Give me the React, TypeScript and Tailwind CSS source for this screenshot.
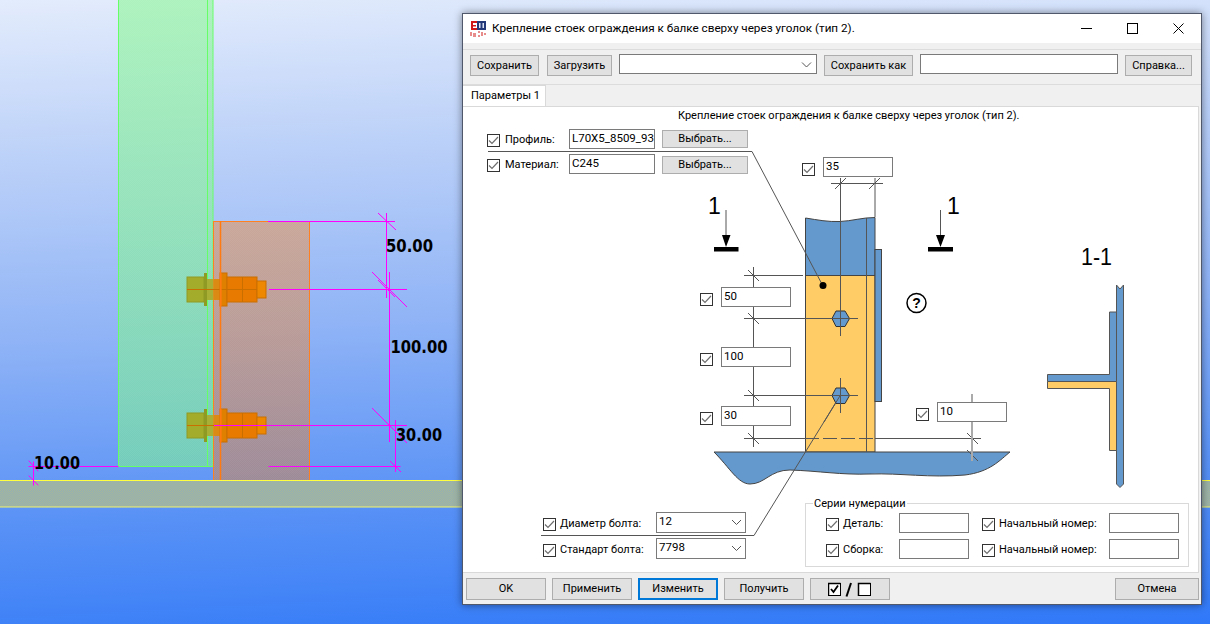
function Check() {
  return (
    <span className="flex h-[13px] w-[13px] shrink-0 items-center justify-center border border-[#333] bg-white">
      <svg width="11" height="11" viewBox="0 0 11 11" fill="none">
        <path d="M1 5.5L4 8.5L10 2" stroke="#6e6e6e" strokeWidth="1.2" />
      </svg>
    </span>
  );
}

function Field({ className = "w-[70px]", value }: { className?: string; value?: string }) {
  return (
    <div className={`h-5 shrink-0 border border-[#7a7a7a] bg-white pl-[2px] text-[11.5px] leading-[16px] text-black ${className}`}>
      {value}
    </div>
  );
}

function Combo({ value }: { value: string }) {
  return (
    <div className="flex h-[21px] w-[90px] shrink-0 items-start justify-between border border-[#7a7a7a] bg-white pl-[2px] pr-[3px] text-[11.5px] leading-[16px] text-black">
      <span>{value}</span>
      <svg width="11" height="19" viewBox="0 0 11 19" fill="none">
        <path d="M1 7L5.5 11.5L10 7" stroke="#555" strokeWidth="1" />
      </svg>
    </div>
  );
}

function Button({ className, label }: { className: string; label: string }) {
  return (
    <div className={`flex h-[21px] shrink-0 items-center justify-center border border-[#adadad] bg-[#e1e1e1] pt-px text-[11px] text-black ${className}`}>
      {label}
    </div>
  );
}

function CheckLabel({ text, className }: { text: string; className: string }) {
  return (
    <div className={`flex shrink-0 items-center ${className}`}>
      <Check />
      <span className="whitespace-nowrap text-[11px] leading-4 text-black">{text}</span>
    </div>
  );
}

function DimRow({ value }: { value: string }) {
  return (
    <div className="flex items-end gap-2">
      <div className="pb-px">
        <Check />
      </div>
      <Field value={value} />
    </div>
  );
}

function Bolt({ y }: { y: number }) {
  return (
    <g>
      <rect x="187" y={y - 12} width="17" height="25" fill="#a3ac2b" stroke="#8f9a24" />
      <rect x="204" y={y - 16} width="3" height="33" fill="#8f9a24" />
      <rect x="207" y={y - 10} width="6.5" height="21" fill="#a9ae34" />
      <rect x="213.5" y={y - 10} width="7" height="21" fill="#db8a14" />
      <rect x="220" y={y - 16} width="7" height="33" fill="#e08000" stroke="#c96f00" />
      <rect x="227" y={y - 12} width="30" height="25" fill="#e87a00" stroke="#c96f00" />
      <rect x="257" y={y - 8} width="9" height="17" fill="#ee8800" stroke="#c96f00" />
      <path d={`M187 ${y + 0.5}H227M227 ${y + 0.5}H257M242.5 ${y - 12}V${y + 13}`} stroke="#c96f00" />
      <rect x="220" y={y - 16} width="1.5" height="33" fill="#ff7a10" />
    </g>
  );
}

function Scene() {
  return (
    <svg className="absolute inset-0" width="1210" height="624" viewBox="0 0 1210 624">
      <defs>
        <pattern id="dither" width="2" height="2" patternUnits="userSpaceOnUse">
          <rect width="1" height="1" fill="#fff" fillOpacity="0.05" />
          <rect x="1" y="1" width="1" height="1" fill="#fff" fillOpacity="0.05" />
        </pattern>
        <pattern id="slab" width="2" height="2" patternUnits="userSpaceOnUse">
          <rect width="2" height="2" fill="#93afb5" />
          <rect width="1" height="1" fill="#a7b898" />
          <rect x="1" y="1" width="1" height="1" fill="#a7b898" />
        </pattern>
      </defs>
      <rect x="118.5" y="-2" width="94.5" height="468.5" fill="#7cfa84" fillOpacity="0.52" stroke="#66ff66" />
      <rect x="119" y="0" width="94" height="466" fill="url(#dither)" />
      <path d="M207.5 0V466" stroke="#66ff66" />
      <rect x="213.5" y="221.5" width="96" height="260" fill="#ff7600" fillOpacity="0.38" stroke="#ff8020" />
      <rect x="214" y="222" width="95" height="258" fill="url(#dither)" />
      <Bolt y={289} />
      <Bolt y={425} />
      <path d="M220.5 221V480" stroke="#ff7a10" strokeWidth="1.5" />
      <rect x="0" y="481" width="1210" height="26" fill="url(#slab)" />
      <path d="M0 480.5H1210" stroke="#ffff40" />
      <path d="M0 507H1210" stroke="#f4f46a" />
      <g stroke="#ff00ff" fill="none">
        <path d="M268 221.5H395M386.5 213V298M378 213L396 230" />
        <path d="M269 289.5H407M389.5 272V442M372 272L407 307M378 280L395 297" />
        <path d="M214 425.5H407M372 408L407 443M395.5 420V472M390 461L401 472" />
        <path d="M269 466.5H400M29 466.5H118M33.5 462V485M29 461L38 471M29 476L38 485" strokeLinecap="square" />
      </g>
      <g fill="#000" fontFamily="'DejaVu Sans', sans-serif" fontWeight="700" fontSize="17">
        <text x="386" y="251.5" textLength="47" lengthAdjust="spacingAndGlyphs">50.00</text>
        <text x="390.5" y="353" textLength="57" lengthAdjust="spacingAndGlyphs">100.00</text>
        <text x="396" y="440.5" textLength="46" lengthAdjust="spacingAndGlyphs">30.00</text>
        <text x="34" y="469" textLength="46" lengthAdjust="spacingAndGlyphs">10.00</text>
      </g>
    </svg>
  );
}

function Drawing() {
  return (
    <svg className="absolute inset-0" width="736" height="467" viewBox="463 106 736 467">
      <path d="M805.5 218C818 220 828 222 840 221.5C852 221 862 217.5 875 217.5V275.5H805.5Z" fill="#6499cd" stroke="#444" />
      <rect x="805.5" y="275.5" width="69.5" height="176.5" fill="#ffcc66" stroke="#444" />
      <rect x="875" y="249.5" width="6.5" height="152" fill="#6499cd" stroke="#444" />
      <path d="M714 452H1010C1000 460 990 472 965 475C930 478 900 473 870 474C840 475 820 471 790 470C770 470 765 484 750 484C738 484 730 468 714 452Z" fill="#6499cd" stroke="#444" />
      <g stroke="#555" fill="none">
        <path d="M866.5 218V452" />
        <path d="M840.5 178V336M840.5 378V413M875 178V217" />
        <path d="M831 183.5H883M835 189L846 178M869 189L880 178" />
        <path d="M753.5 267V447" />
        <path d="M744 275.5H803M744 318.5H858M744 395.5H858M744 438.5H805M875 438.5H981" />
        <path d="M805 438.5H875" strokeDasharray="14 4" />
        <path d="M748 270L759 281M748 313L759 324M748 390L759 401M748 433L759 444" />
        <path d="M967 433L978 444M967 450L978 461" />
        <path d="M488 151.5H752L822.7 285.5" />
        <path d="M541 535.5H754L840.5 395" />
      </g>
      <path d="M972 394V461" stroke="#aaa" strokeWidth="2" />
      <path d="M832 318.5L836 311H845L849.5 318.5L845 326.5H836Z" fill="#6499cd" stroke="#333" />
      <path d="M832 395.5L836 388H845L849.5 395.5L845 403.5H836Z" fill="#6499cd" stroke="#333" />
      <path d="M831 318.5H858M831 395.5H858M840.5 308V336M840.5 378V413" stroke="#555" />
      <path d="M840.5 395L824 422" stroke="#555" />
      <circle cx="823" cy="285.5" r="3.5" fill="#000" />
      <path d="M726 210V235M940.5 210V235" stroke="#555" />
      <path d="M722 235H730.5L726 247ZM936 235H945L940.5 247Z" fill="#000" />
      <rect x="714" y="247" width="24.5" height="4.5" fill="#000" />
      <rect x="928" y="247" width="25" height="4.5" fill="#000" />
      <circle cx="916.5" cy="303" r="9.5" fill="#fff" stroke="#000" strokeWidth="1.5" />
      <text x="916.5" y="308" textAnchor="middle" fontFamily="'Liberation Sans', sans-serif" fontWeight="700" fontSize="14" fill="#000">?</text>
      <g fontFamily="'Liberation Sans', sans-serif" fill="#000">
        <text x="708" y="214" fontSize="23">1</text>
        <text x="947" y="214" fontSize="23">1</text>
        <text x="1081" y="265" fontSize="23" textLength="31" lengthAdjust="spacingAndGlyphs">1-1</text>
      </g>
      <path d="M1116.5 285L1120 289L1123.5 285V484L1120 487.5L1116.5 484Z" fill="#6499cd" stroke="#555" />
      <path d="M1109.5 312H1116.5V381.5H1047.5V374.5H1109.5Z" fill="#6499cd" stroke="#555" />
      <path d="M1047.5 381.5H1116.5V450.5H1109.5V388.5H1047.5Z" fill="#ffcc66" stroke="#555" />
    </svg>
  );
}

function TitleIcon() {
  return (
    <svg width="17" height="18" viewBox="0 0 17 18" className="ml-[7px] shrink-0">
      <rect x="7" y="1" width="9" height="9" fill="#243a78" />
      <path d="M9 3H10.5V8H9ZM12.5 3H14V8H12.5Z" fill="#dfe4f4" />
      <path d="M1 1H7V3H3V5H6V6.5H3V8H7V10H1Z" fill="#d01818" />
      <path d="M1 12V16M3 14H6M3 16H6M8 12H10M8 16H10M12 12V16M14 14H16" stroke="#d01818" />
    </svg>
  );
}

export default function App() {
  return (
    <div className="relative h-[624px] w-[1210px] overflow-hidden bg-[linear-gradient(177deg,#e3ecfc_0%,#b9cff8_25%,#8fb3f6_50%,#5b93f6_75%,#2f78f8_100%)] font-['Roboto',sans-serif]">
      <Scene />
      <div className="absolute left-[462px] top-[13px] flex h-[592px] w-[740px] flex-col border border-[#50596b] bg-[#f0f0f0] shadow-[0_0_8px_rgba(0,0,0,0.45)]">
        <div className="flex h-[29px] shrink-0 items-center bg-white">
          <TitleIcon />
          <span className="ml-[5px] whitespace-nowrap text-[11.7px] text-black">Крепление стоек ограждения к балке сверху через уголок (тип 2).</span>
          <div className="ml-auto flex items-center gap-[35px] pr-[17px]">
            <svg width="11" height="11" viewBox="0 0 11 11"><path d="M0 5.5H11" stroke="#000" /></svg>
            <svg width="11" height="11" viewBox="0 0 11 11"><rect x="0.5" y="0.5" width="10" height="10" fill="none" stroke="#000" /></svg>
            <svg width="11" height="11" viewBox="0 0 11 11"><path d="M0.5 0.5L10.5 10.5M10.5 0.5L0.5 10.5" stroke="#000" /></svg>
          </div>
        </div>
        <div className="mt-[6px] flex h-[36px] shrink-0 items-start gap-[7px] border-y border-[#dcdcdc] pl-[7px] pt-[4px]">
          <Button className="mt-px w-[69px]" label="Сохранить" />
          <Button className="ml-px mt-px w-[65px]" label="Загрузить" />
          <div className="flex h-5 w-[198px] items-center justify-end border border-[#7a7a7a] bg-white pr-[4px]">
            <svg width="11" height="11" viewBox="0 0 11 11" fill="none"><path d="M1 3.5L5.5 8L10 3.5" stroke="#555" /></svg>
          </div>
          <Button className="mt-px w-[89px]" label="Сохранить как" />
          <div className="h-5 w-[198px] border border-[#7a7a7a] bg-white" />
          <Button className="mt-px w-[67px]" label="Справка..." />
        </div>
        <div className="flex h-[21px] shrink-0">
          <div className="flex w-[83px] items-center whitespace-nowrap border border-b-0 border-l-0 border-[#d9d9d9] bg-white pl-[8px] text-[11px] text-black">Параметры 1</div>
        </div>
        <div className="relative mr-[2px] h-[467px] shrink-0 overflow-hidden border-b border-r border-[#d9d9d9] bg-white shadow-[inset_0_1px_0_0_#d9d9d9]">
          <Drawing />
          <div className="relative pl-[215px] pt-[2px] text-[11px] leading-4 text-black">Крепление стоек ограждения к балке сверху через уголок (тип 2).</div>

          <div className="absolute left-[24px] top-[23px] flex flex-col gap-[5px]">
            <div className="flex items-end">
              <CheckLabel className="w-[82px] gap-[5px] pb-px" text="Профиль:" />
              <Field className="w-[86px]" value="L70X5_8509_93" />
              <Button className="mb-px ml-[7px] !h-[18px] w-[86px]" label="Выбрать..." />
            </div>
            <div className="flex items-end">
              <CheckLabel className="w-[82px] gap-[5px] pb-px" text="Материал:" />
              <Field className="w-[86px]" value="С245" />
              <Button className="ml-[7px] !h-[18px] w-[86px]" label="Выбрать..." />
            </div>
          </div>

          <div className="absolute left-[339px] top-[51px]">
            <DimRow value="35" />
          </div>

          <div className="absolute left-[237px] top-[181px] flex flex-col gap-[39.5px]">
            <DimRow value="50" />
            <DimRow value="100" />
            <DimRow value="30" />
          </div>

          <div className="absolute left-[453px] top-[296px]">
            <DimRow value="10" />
          </div>

          <div className="absolute left-[80px] top-[406px] flex flex-col gap-[5px]">
            <div className="flex items-end">
              <CheckLabel className="w-[113px] gap-1 pb-px" text="Диаметр болта:" />
              <Combo value="12" />
            </div>
            <div className="flex items-end">
              <CheckLabel className="w-[113px] gap-1 pb-px" text="Стандарт болта:" />
              <Combo value="7798" />
            </div>
          </div>

          <div className="absolute left-[342px] top-[397px] h-[64px] w-[384px] border border-[#d9d9d9]">
            <span className="absolute left-[7px] top-[-8px] whitespace-nowrap bg-white px-[1px] text-[11px] leading-4 text-black">Серии нумерации</span>
            <div className="grid grid-cols-[73px_83px_127px_70px] items-end gap-y-[6px] pl-[20px] pt-[9px]">
              <CheckLabel className="gap-1 pb-px" text="Деталь:" />
              <Field />
              <CheckLabel className="gap-1 pb-px" text="Начальный номер:" />
              <Field />
              <CheckLabel className="gap-1 pb-px" text="Сборка:" />
              <Field />
              <CheckLabel className="gap-1 pb-px" text="Начальный номер:" />
              <Field />
            </div>
          </div>
        </div>
        <div className="mt-[5px] flex h-[22px] shrink-0 gap-[6px] pl-[3px]">
          <Button className="!h-[22px] w-[80px]" label="OK" />
          <Button className="!h-[22px] w-[80px]" label="Применить" />
          <Button className="!h-[22px] w-[80px] !border-2 !border-[#0078d7]" label="Изменить" />
          <Button className="!h-[22px] w-[80px]" label="Получить" />
          <div className="flex h-[22px] w-[80px] items-center justify-center border border-[#adadad] bg-[#e1e1e1]">
            <svg width="44" height="15" viewBox="0 0 44 15" fill="none">
              <rect x="0.5" y="1.5" width="12" height="12" fill="#fff" stroke="#000" />
              <path d="M0.5 14V1.5H12.5" stroke="#000" strokeWidth="1.5" />
              <path d="M3 7L5.5 10L10 3.5" stroke="#000" strokeWidth="1.8" />
              <path d="M23 1L18.5 14.5" stroke="#000" strokeWidth="2" />
              <rect x="30.5" y="1.5" width="12" height="12" fill="#fff" stroke="#000" />
              <path d="M30.5 14V1.5H42.5" stroke="#000" strokeWidth="1.5" />
            </svg>
          </div>
          <Button className="ml-auto mr-[2px] !h-[22px] w-[84px]" label="Отмена" />
        </div>
      </div>
    </div>
  );
}
